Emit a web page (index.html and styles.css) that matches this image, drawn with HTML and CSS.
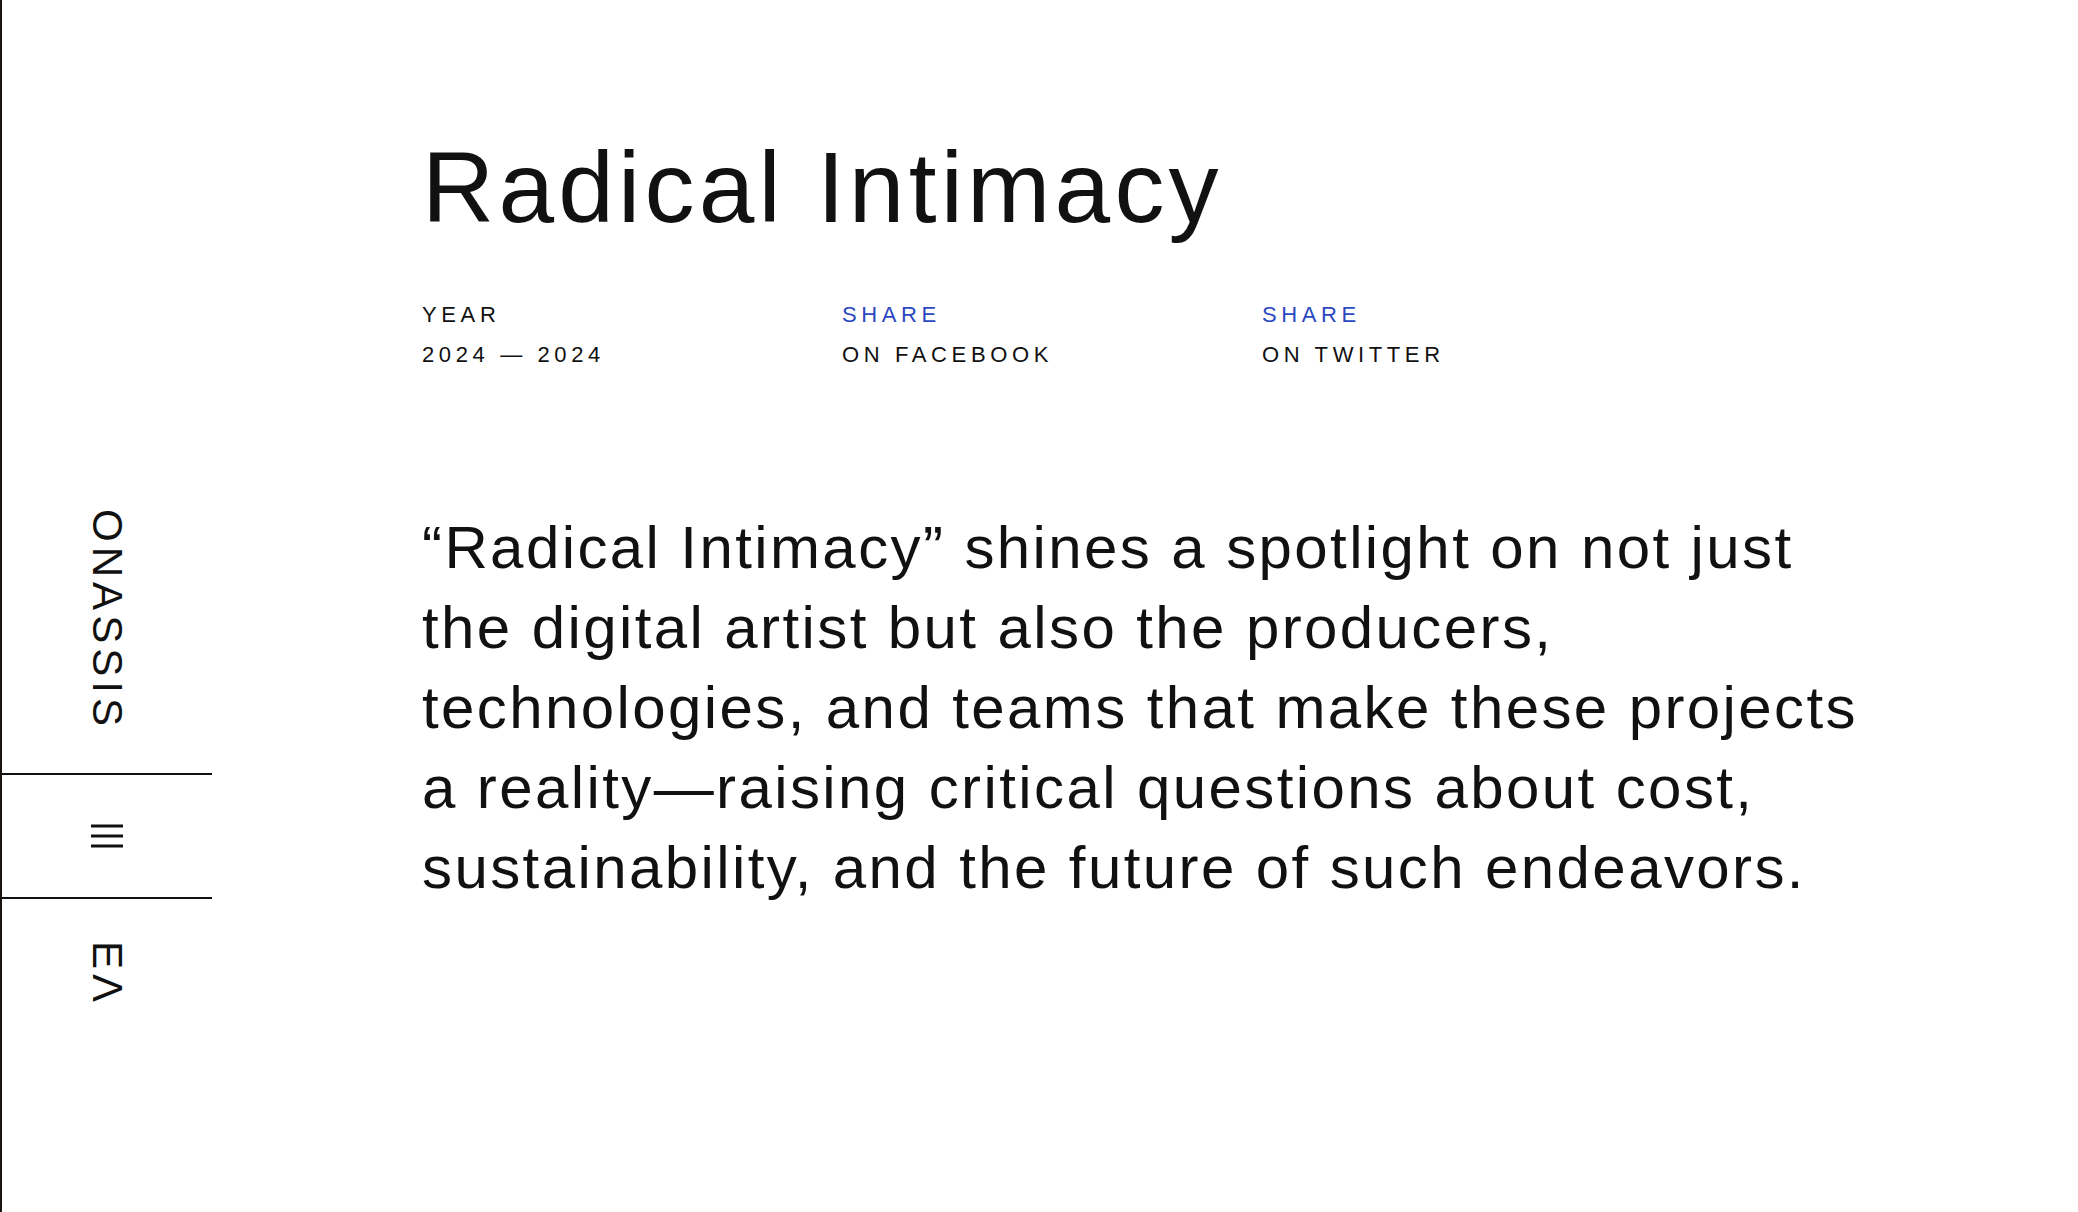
FILE: index.html
```html
<!DOCTYPE html>
<html lang="en">
<head>
    <meta charset="UTF-8">
    <meta name="viewport" content="width=device-width, initial-scale=1.0">
    <title>Radical Intimacy</title>
    <link rel="stylesheet" href="styles.css">
</head>
<body>
    <div class="page">
        <aside class="sidebar">
            <div class="brand">
                <span class="vertical">ONASSIS</span>
            </div>
            <div class="menu">
                <svg class="menu-icon" width="32" height="24" viewBox="0 0 32 24">
                    <line x1="0" y1="2" x2="32" y2="2" />
                    <line x1="0" y1="12" x2="32" y2="12" />
                    <line x1="0" y1="22" x2="32" y2="22" />
                </svg>
            </div>
            <div class="lang">
                <span class="vertical">ΕΛ</span>
            </div>
        </aside>

        <main class="content">
            <h1 class="title">Radical Intimacy</h1>

            <div class="meta">
                <div class="meta-item">
                    <span>Year</span>
                    <span>2024 — 2024</span>
                </div>
                <a class="meta-item" href="#">
                    <span class="share">Share</span>
                    <span>On Facebook</span>
                </a>
                <a class="meta-item" href="#">
                    <span class="share">Share</span>
                    <span>On Twitter</span>
                </a>
            </div>

            <p class="lead">
                “Radical Intimacy” shines a spotlight on not just the digital artist but also
                the producers, technologies, and teams that make these projects a
                reality—raising critical questions about cost, sustainability, and the
                future of such endeavors.
            </p>
        </main>
    </div>
</body>
</html>
```

FILE: styles.css
```css
body {
    margin: 0;
    padding: 0;
    background: #fff;
    color: #111;
    font-family: "Liberation Sans", Arial, sans-serif;
}
.page {
    display: flex;
    min-height: 100vh;
}
.sidebar {
    display: flex;
    flex-direction: column;
    width: 212px;
    height: 100vh;
    flex-shrink: 0;
    box-sizing: border-box;
    border-left: 2px solid #1b1512;
}
.vertical {
    writing-mode: vertical-rl;
    font-size: 42px;
    line-height: 1;
    letter-spacing: 0.12em;
}
.brand {
    flex: 1;
    display: flex;
    align-items: flex-end;
    justify-content: center;
    padding-bottom: 42px;
}
.menu {
    height: 122px;
    display: flex;
    align-items: center;
    justify-content: center;
    border-top: 2px solid #111;
    border-bottom: 2px solid #111;
}
.menu-icon line {
    stroke: #111;
    stroke-width: 3;
}
.lang {
    height: 313px;
    box-sizing: border-box;
    display: flex;
    justify-content: center;
    align-items: flex-start;
    padding-top: 42px;
}
.content {
    flex: 1;
    padding: 137px 0 0 210px;
}
.title {
    margin: 0;
    font-size: 100px;
    line-height: 1;
    font-weight: 400;
    letter-spacing: 0.042em;
}
.meta {
    display: grid;
    grid-template-columns: repeat(3, 420px);
    margin-top: 58px;
}
.meta-item {
    display: flex;
    flex-direction: column;
    font-size: 22px;
    line-height: 40px;
    letter-spacing: 0.21em;
    text-transform: uppercase;
    color: #111;
    text-decoration: none;
}
.share {
    color: #2b48c1;
}
.lead {
    margin: 133px 0 0;
    max-width: 1470px;
    font-size: 60px;
    line-height: 80px;
    letter-spacing: 0.04em;
}
```
